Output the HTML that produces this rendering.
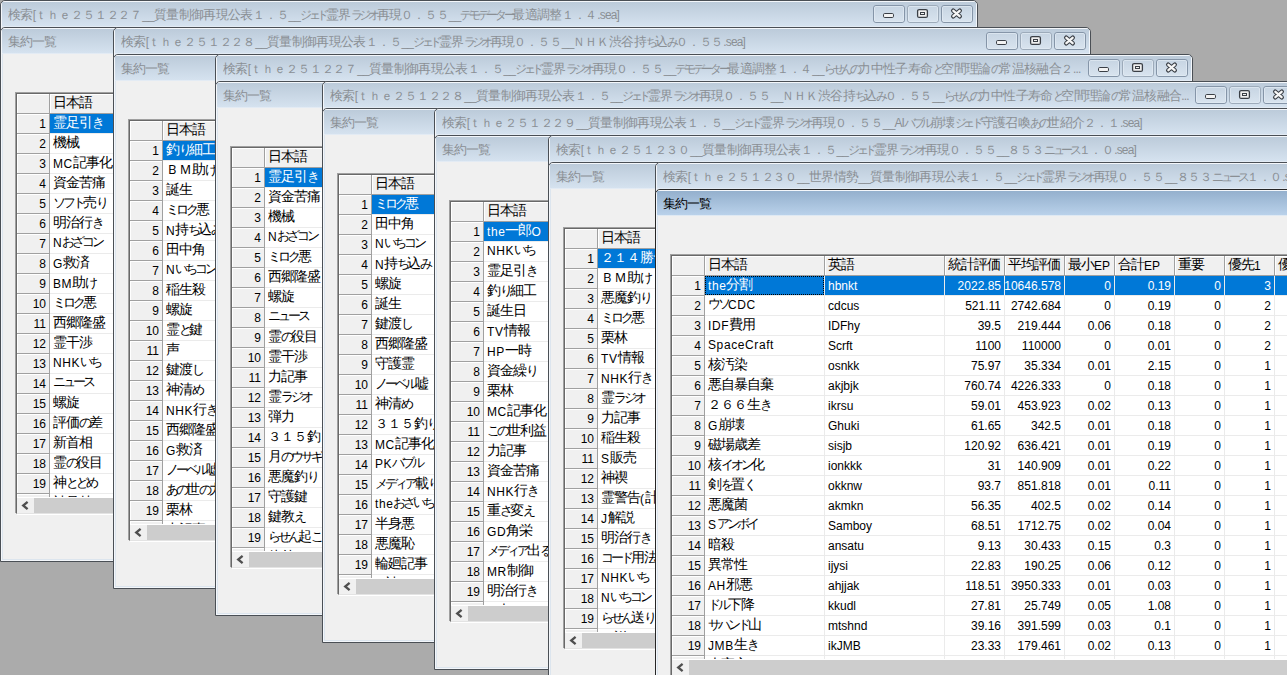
<!DOCTYPE html>
<html><head><meta charset="utf-8"><style>
html,body{margin:0;padding:0}
body{width:1287px;height:675px;overflow:hidden;background:#ababab;position:relative;font-family:"Liberation Sans",sans-serif;font-size:12px;color:#000}
.w{position:absolute;width:978px;height:535px;box-sizing:border-box;border:1px solid #4a4f55;border-radius:5px 5px 0 0;background:#f0f0f0;overflow:hidden}
.w::before{content:"";position:absolute;left:0;top:0;right:0;bottom:0;border:1px solid #f4f7fb;border-radius:4px 4px 0 0;box-shadow:inset 1px 0 0 #dce5ee,inset -1px 0 0 #dce5ee,inset 0 -1px 0 #dce5ee}
.tb{position:absolute;left:1px;right:1px;top:1px;height:24px;background:linear-gradient(#bccbda,#d5e2ef);border-bottom:1px solid #e3ebf4}
.act{border-color:#262626}
.act .tb{background:linear-gradient(#94b0cd,#b9d1ea);border-bottom-color:#dfe9f3}
.tt{position:absolute;left:6px;top:6px;white-space:nowrap;color:#8a8f94;font-size:12px;line-height:14px}
.act .tt{color:#000}
.grid{position:absolute;left:15px;top:65px;width:950px;height:419px;border:1px solid;border-color:#696969 #e3e3e3 #e3e3e3 #696969;box-shadow:-1px -1px 0 #a0a0a0,1px 1px 0 #fff;background:#fff;overflow:hidden}
.grid>div{position:absolute;box-sizing:border-box;height:20px;white-space:nowrap;overflow:hidden}
.hdr{background:#f0f0f0;border-right:1px solid #a0a0a0;border-bottom:1px solid #a0a0a0;box-shadow:inset 1px 1px 0 #fff}
.hdr>span{position:absolute;left:3px;top:2px;line-height:14px}
.rh{left:0;width:33px;background:#f0f0f0;border-right:1px solid #a0a0a0;border-bottom:1px solid #a0a0a0;box-shadow:inset 1px 1px 0 #fff}
.rh>span{position:absolute;right:3px;top:3px;line-height:14px}
.c{border-right:1px solid #ebebeb;border-bottom:1px solid #ebebeb}
.c>span{position:absolute;left:3px;top:3px;line-height:14px}
.c.r>span{left:auto;right:3px}
.c.jp>span{top:2px}
.c.sel{background:#0078d7;color:#fff}
.c.foc::after{content:"";position:absolute;left:0;top:0;right:0;bottom:0;border:1px dotted #000}
.hsb{left:0;top:403px;width:948px;height:16px !important;background:#f0f0f0;box-shadow:inset 0 1px 0 #fff}
.arr{position:absolute;left:0;top:0}
.thumb{position:absolute;left:17px;top:1px;width:931px;height:15px;background:#cdcdcd}

.tt .K{font-size:12.5px;letter-spacing:-0.5px}
.tt .H{font-size:12px;letter-spacing:-3.3px}
.tt .h{letter-spacing:-1.2px}
.tt .L{letter-spacing:-0.8px}
.grid .K{font-size:14px;letter-spacing:-1px}
.grid .H{font-size:13px;letter-spacing:-3px}
.grid .F{font-size:13px}
.ken .tt{transform:scaleX(.99);transform-origin:0 0}
.btns{position:absolute;left:871px;top:3px}
.grid .K,.grid .H,.grid .F{position:relative;top:-1px}
.c.jp .L{letter-spacing:.6px}
.shu .tt .K{letter-spacing:-1px}

</style></head><body>
<div class="w ken" style="left:0px;top:0px"><div class="tb"><span class="tt"><span class="K">検索</span><span class="L">[</span><span class="F">ｔｈｅ２５１２２７</span><span class="L">__</span><span class="K">質量制御再現公表</span><span class="F">１．５</span><span class="L">__</span><span class="H">ジェド</span><span class="K">霊界</span><span class="H">ラジオ</span><span class="K">再現</span><span class="F">０．５５</span><span class="L">__</span><span class="H">デモデーター</span><span class="K">最適調整</span><span class="F">１．４</span><span class="L">.sea]</span></span><svg class="btns" width="100" height="18" viewBox="0 0 100 18"><defs><linearGradient id="bg" x1="0" y1="0" x2="0" y2="1"><stop offset="0" stop-color="#c6d4e2"/><stop offset="1" stop-color="#d9e4ef"/></linearGradient></defs>
<rect x="0.5" y="0.5" width="31" height="17" rx="2.5" fill="url(#bg)" stroke="#8595a8"/><rect x="1.5" y="1.5" width="29" height="15" rx="1.5" fill="none" stroke="#e3ebf3" stroke-opacity=".7"/>
<rect x="34.5" y="0.5" width="31" height="17" rx="2.5" fill="url(#bg)" stroke="#9dabba"/><rect x="35.5" y="1.5" width="29" height="15" rx="1.5" fill="none" stroke="#e3ebf3" stroke-opacity=".7"/>
<rect x="68.5" y="0.5" width="31" height="17" rx="2.5" fill="url(#bg)" stroke="#8595a8"/><rect x="69.5" y="1.5" width="29" height="15" rx="1.5" fill="none" stroke="#e3ebf3" stroke-opacity=".7"/>
<rect x="10.5" y="8.5" width="10" height="4" rx="1.2" fill="#f3f3f3" stroke="#3a3f46"/>
<rect x="44.6" y="4.6" width="9.8" height="7.8" rx="1.5" fill="#efefef" stroke="#3a3f46" stroke-width="1.3"/><rect x="47.5" y="7.5" width="4" height="2" fill="#f3f3f3" stroke="#3a3f46"/>
<path d="M80.2 5.6 L86.8 11.4 M86.8 5.6 L80.2 11.4" stroke="#3a3f46" stroke-width="4.4" stroke-linecap="round"/><path d="M80.4 5.8 L86.6 11.2 M86.6 5.8 L80.4 11.2" stroke="#f6f6f6" stroke-width="2.4" stroke-linecap="round"/>
</svg></div></div>
<div class="w shu" style="left:0px;top:27px"><div class="tb"><span class="tt"><span class="K">集約一覧</span></span></div><div class="grid">
<div class="hdr" style="left:0;top:0;width:33px"></div>
<div class="hdr" style="left:33px;top:0;width:120px"><span><span class="K">日本語</span></span></div>
<div class="rh" style="top:20px"><span>1</span></div>
<div class="c sel jp" style="left:33px;top:20px;width:120px"><span><span class="K">霊足引</span><span class="H">き</span></span></div>
<div class="rh" style="top:40px"><span>2</span></div>
<div class="c jp" style="left:33px;top:40px;width:120px"><span><span class="K">機械</span></span></div>
<div class="rh" style="top:60px"><span>3</span></div>
<div class="c jp" style="left:33px;top:60px;width:120px"><span><span class="L">MC</span><span class="K">記事化</span></span></div>
<div class="rh" style="top:80px"><span>4</span></div>
<div class="c jp" style="left:33px;top:80px;width:120px"><span><span class="K">資金苦痛</span></span></div>
<div class="rh" style="top:100px"><span>5</span></div>
<div class="c jp" style="left:33px;top:100px;width:120px"><span><span class="H">ソフト</span><span class="K">売</span><span class="H">り</span></span></div>
<div class="rh" style="top:120px"><span>6</span></div>
<div class="c jp" style="left:33px;top:120px;width:120px"><span><span class="K">明治行</span><span class="H">き</span></span></div>
<div class="rh" style="top:140px"><span>7</span></div>
<div class="c jp" style="left:33px;top:140px;width:120px"><span><span class="L">N</span><span class="H">おざコン</span></span></div>
<div class="rh" style="top:160px"><span>8</span></div>
<div class="c jp" style="left:33px;top:160px;width:120px"><span><span class="L">G</span><span class="K">救済</span></span></div>
<div class="rh" style="top:180px"><span>9</span></div>
<div class="c jp" style="left:33px;top:180px;width:120px"><span><span class="L">BM</span><span class="K">助</span><span class="H">け</span></span></div>
<div class="rh" style="top:200px"><span>10</span></div>
<div class="c jp" style="left:33px;top:200px;width:120px"><span><span class="H">ミロク</span><span class="K">悪</span></span></div>
<div class="rh" style="top:220px"><span>11</span></div>
<div class="c jp" style="left:33px;top:220px;width:120px"><span><span class="K">西郷隆盛</span></span></div>
<div class="rh" style="top:240px"><span>12</span></div>
<div class="c jp" style="left:33px;top:240px;width:120px"><span><span class="K">霊干渉</span></span></div>
<div class="rh" style="top:260px"><span>13</span></div>
<div class="c jp" style="left:33px;top:260px;width:120px"><span><span class="L">NHK</span><span class="H">いち</span></span></div>
<div class="rh" style="top:280px"><span>14</span></div>
<div class="c jp" style="left:33px;top:280px;width:120px"><span><span class="H">ニュース</span></span></div>
<div class="rh" style="top:300px"><span>15</span></div>
<div class="c jp" style="left:33px;top:300px;width:120px"><span><span class="K">螺旋</span></span></div>
<div class="rh" style="top:320px"><span>16</span></div>
<div class="c jp" style="left:33px;top:320px;width:120px"><span><span class="K">評価</span><span class="H">の</span><span class="K">差</span></span></div>
<div class="rh" style="top:340px"><span>17</span></div>
<div class="c jp" style="left:33px;top:340px;width:120px"><span><span class="K">新首相</span></span></div>
<div class="rh" style="top:360px"><span>18</span></div>
<div class="c jp" style="left:33px;top:360px;width:120px"><span><span class="K">霊</span><span class="H">の</span><span class="K">役目</span></span></div>
<div class="rh" style="top:380px"><span>19</span></div>
<div class="c jp" style="left:33px;top:380px;width:120px"><span><span class="K">神</span><span class="H">とどめ</span></span></div>
<div class="rh" style="top:400px"><span>20</span></div>
<div class="c jp" style="left:33px;top:400px;width:120px"><span><span class="K">神足林</span></span></div>
<div class="hsb"><svg class="arr" width="17" height="16" viewBox="0 0 17 16"><path d="M10.6 4.8 L6.2 8.5 L10.6 12.2" stroke="#4f4f4f" stroke-width="2.3" fill="none"/></svg><div class="thumb"></div></div>
</div></div>
<div class="w ken" style="left:113px;top:27px"><div class="tb"><span class="tt"><span class="K">検索</span><span class="L">[</span><span class="F">ｔｈｅ２５１２２８</span><span class="L">__</span><span class="K">質量制御再現公表</span><span class="F">１．５</span><span class="L">__</span><span class="H">ジェド</span><span class="K">霊界</span><span class="H">ラジオ</span><span class="K">再現</span><span class="F">０．５５</span><span class="L">__</span><span class="F">ＮＨＫ</span><span class="K">渋谷持</span><span class="H">ち</span><span class="K">込</span><span class="H">み</span><span class="F">０．５５</span><span class="L">.sea]</span></span><svg class="btns" width="100" height="18" viewBox="0 0 100 18"><defs><linearGradient id="bg" x1="0" y1="0" x2="0" y2="1"><stop offset="0" stop-color="#c6d4e2"/><stop offset="1" stop-color="#d9e4ef"/></linearGradient></defs>
<rect x="0.5" y="0.5" width="31" height="17" rx="2.5" fill="url(#bg)" stroke="#8595a8"/><rect x="1.5" y="1.5" width="29" height="15" rx="1.5" fill="none" stroke="#e3ebf3" stroke-opacity=".7"/>
<rect x="34.5" y="0.5" width="31" height="17" rx="2.5" fill="url(#bg)" stroke="#9dabba"/><rect x="35.5" y="1.5" width="29" height="15" rx="1.5" fill="none" stroke="#e3ebf3" stroke-opacity=".7"/>
<rect x="68.5" y="0.5" width="31" height="17" rx="2.5" fill="url(#bg)" stroke="#8595a8"/><rect x="69.5" y="1.5" width="29" height="15" rx="1.5" fill="none" stroke="#e3ebf3" stroke-opacity=".7"/>
<rect x="10.5" y="8.5" width="10" height="4" rx="1.2" fill="#f3f3f3" stroke="#3a3f46"/>
<rect x="44.6" y="4.6" width="9.8" height="7.8" rx="1.5" fill="#efefef" stroke="#3a3f46" stroke-width="1.3"/><rect x="47.5" y="7.5" width="4" height="2" fill="#f3f3f3" stroke="#3a3f46"/>
<path d="M80.2 5.6 L86.8 11.4 M86.8 5.6 L80.2 11.4" stroke="#3a3f46" stroke-width="4.4" stroke-linecap="round"/><path d="M80.4 5.8 L86.6 11.2 M86.6 5.8 L80.4 11.2" stroke="#f6f6f6" stroke-width="2.4" stroke-linecap="round"/>
</svg></div></div>
<div class="w shu" style="left:113px;top:54px"><div class="tb"><span class="tt"><span class="K">集約一覧</span></span></div><div class="grid">
<div class="hdr" style="left:0;top:0;width:33px"></div>
<div class="hdr" style="left:33px;top:0;width:120px"><span><span class="K">日本語</span></span></div>
<div class="rh" style="top:20px"><span>1</span></div>
<div class="c sel jp" style="left:33px;top:20px;width:120px"><span><span class="K">釣</span><span class="H">り</span><span class="K">細工</span></span></div>
<div class="rh" style="top:40px"><span>2</span></div>
<div class="c jp" style="left:33px;top:40px;width:120px"><span><span class="F">ＢＭ</span><span class="K">助</span><span class="H">け</span></span></div>
<div class="rh" style="top:60px"><span>3</span></div>
<div class="c jp" style="left:33px;top:60px;width:120px"><span><span class="K">誕生</span></span></div>
<div class="rh" style="top:80px"><span>4</span></div>
<div class="c jp" style="left:33px;top:80px;width:120px"><span><span class="H">ミロク</span><span class="K">悪</span></span></div>
<div class="rh" style="top:100px"><span>5</span></div>
<div class="c jp" style="left:33px;top:100px;width:120px"><span><span class="L">N</span><span class="K">持</span><span class="H">ち</span><span class="K">込</span><span class="H">み</span></span></div>
<div class="rh" style="top:120px"><span>6</span></div>
<div class="c jp" style="left:33px;top:120px;width:120px"><span><span class="K">田中角</span></span></div>
<div class="rh" style="top:140px"><span>7</span></div>
<div class="c jp" style="left:33px;top:140px;width:120px"><span><span class="L">N</span><span class="H">いちコン</span></span></div>
<div class="rh" style="top:160px"><span>8</span></div>
<div class="c jp" style="left:33px;top:160px;width:120px"><span><span class="K">稲生殺</span></span></div>
<div class="rh" style="top:180px"><span>9</span></div>
<div class="c jp" style="left:33px;top:180px;width:120px"><span><span class="K">螺旋</span></span></div>
<div class="rh" style="top:200px"><span>10</span></div>
<div class="c jp" style="left:33px;top:200px;width:120px"><span><span class="K">霊</span><span class="H">と</span><span class="K">鍵</span></span></div>
<div class="rh" style="top:220px"><span>11</span></div>
<div class="c jp" style="left:33px;top:220px;width:120px"><span><span class="K">声</span></span></div>
<div class="rh" style="top:240px"><span>12</span></div>
<div class="c jp" style="left:33px;top:240px;width:120px"><span><span class="K">鍵渡</span><span class="H">し</span></span></div>
<div class="rh" style="top:260px"><span>13</span></div>
<div class="c jp" style="left:33px;top:260px;width:120px"><span><span class="K">神清</span><span class="H">め</span></span></div>
<div class="rh" style="top:280px"><span>14</span></div>
<div class="c jp" style="left:33px;top:280px;width:120px"><span><span class="L">NHK</span><span class="K">行</span><span class="H">き</span></span></div>
<div class="rh" style="top:300px"><span>15</span></div>
<div class="c jp" style="left:33px;top:300px;width:120px"><span><span class="K">西郷隆盛</span></span></div>
<div class="rh" style="top:320px"><span>16</span></div>
<div class="c jp" style="left:33px;top:320px;width:120px"><span><span class="L">G</span><span class="K">救済</span></span></div>
<div class="rh" style="top:340px"><span>17</span></div>
<div class="c jp" style="left:33px;top:340px;width:120px"><span><span class="H">ノーベル</span><span class="K">嘘</span></span></div>
<div class="rh" style="top:360px"><span>18</span></div>
<div class="c jp" style="left:33px;top:360px;width:120px"><span><span class="H">あの</span><span class="K">世</span><span class="H">の</span><span class="K">力</span></span></div>
<div class="rh" style="top:380px"><span>19</span></div>
<div class="c jp" style="left:33px;top:380px;width:120px"><span><span class="K">栗林</span></span></div>
<div class="rh" style="top:400px"><span>20</span></div>
<div class="c jp" style="left:33px;top:400px;width:120px"><span><span class="K">力記事</span></span></div>
<div class="hsb"><svg class="arr" width="17" height="16" viewBox="0 0 17 16"><path d="M10.6 4.8 L6.2 8.5 L10.6 12.2" stroke="#4f4f4f" stroke-width="2.3" fill="none"/></svg><div class="thumb"></div></div>
</div></div>
<div class="w ken" style="left:215px;top:54px"><div class="tb"><span class="tt"><span class="K">検索</span><span class="L">[</span><span class="F">ｔｈｅ２５１２２７</span><span class="L">__</span><span class="K">質量制御再現公表</span><span class="F">１．５</span><span class="L">__</span><span class="H">ジェド</span><span class="K">霊界</span><span class="H">ラジオ</span><span class="K">再現</span><span class="F">０．５５</span><span class="L">__</span><span class="H">デモデーター</span><span class="K">最適調整</span><span class="F">１．４</span><span class="L">__</span><span class="H">らせんの</span><span class="K">力中性子寿命</span><span class="H">と</span><span class="K">空間理論</span><span class="H">の</span><span class="K">常温核融合</span><span class="F">２</span><span class="L">...</span></span><svg class="btns" width="100" height="18" viewBox="0 0 100 18"><defs><linearGradient id="bg" x1="0" y1="0" x2="0" y2="1"><stop offset="0" stop-color="#c6d4e2"/><stop offset="1" stop-color="#d9e4ef"/></linearGradient></defs>
<rect x="0.5" y="0.5" width="31" height="17" rx="2.5" fill="url(#bg)" stroke="#8595a8"/><rect x="1.5" y="1.5" width="29" height="15" rx="1.5" fill="none" stroke="#e3ebf3" stroke-opacity=".7"/>
<rect x="34.5" y="0.5" width="31" height="17" rx="2.5" fill="url(#bg)" stroke="#9dabba"/><rect x="35.5" y="1.5" width="29" height="15" rx="1.5" fill="none" stroke="#e3ebf3" stroke-opacity=".7"/>
<rect x="68.5" y="0.5" width="31" height="17" rx="2.5" fill="url(#bg)" stroke="#8595a8"/><rect x="69.5" y="1.5" width="29" height="15" rx="1.5" fill="none" stroke="#e3ebf3" stroke-opacity=".7"/>
<rect x="10.5" y="8.5" width="10" height="4" rx="1.2" fill="#f3f3f3" stroke="#3a3f46"/>
<rect x="44.6" y="4.6" width="9.8" height="7.8" rx="1.5" fill="#efefef" stroke="#3a3f46" stroke-width="1.3"/><rect x="47.5" y="7.5" width="4" height="2" fill="#f3f3f3" stroke="#3a3f46"/>
<path d="M80.2 5.6 L86.8 11.4 M86.8 5.6 L80.2 11.4" stroke="#3a3f46" stroke-width="4.4" stroke-linecap="round"/><path d="M80.4 5.8 L86.6 11.2 M86.6 5.8 L80.4 11.2" stroke="#f6f6f6" stroke-width="2.4" stroke-linecap="round"/>
</svg></div></div>
<div class="w shu" style="left:215px;top:81px"><div class="tb"><span class="tt"><span class="K">集約一覧</span></span></div><div class="grid">
<div class="hdr" style="left:0;top:0;width:33px"></div>
<div class="hdr" style="left:33px;top:0;width:120px"><span><span class="K">日本語</span></span></div>
<div class="rh" style="top:20px"><span>1</span></div>
<div class="c sel jp" style="left:33px;top:20px;width:120px"><span><span class="K">霊足引</span><span class="H">き</span></span></div>
<div class="rh" style="top:40px"><span>2</span></div>
<div class="c jp" style="left:33px;top:40px;width:120px"><span><span class="K">資金苦痛</span></span></div>
<div class="rh" style="top:60px"><span>3</span></div>
<div class="c jp" style="left:33px;top:60px;width:120px"><span><span class="K">機械</span></span></div>
<div class="rh" style="top:80px"><span>4</span></div>
<div class="c jp" style="left:33px;top:80px;width:120px"><span><span class="L">N</span><span class="H">おざコン</span></span></div>
<div class="rh" style="top:100px"><span>5</span></div>
<div class="c jp" style="left:33px;top:100px;width:120px"><span><span class="H">ミロク</span><span class="K">悪</span></span></div>
<div class="rh" style="top:120px"><span>6</span></div>
<div class="c jp" style="left:33px;top:120px;width:120px"><span><span class="K">西郷隆盛</span></span></div>
<div class="rh" style="top:140px"><span>7</span></div>
<div class="c jp" style="left:33px;top:140px;width:120px"><span><span class="K">螺旋</span></span></div>
<div class="rh" style="top:160px"><span>8</span></div>
<div class="c jp" style="left:33px;top:160px;width:120px"><span><span class="H">ニュース</span></span></div>
<div class="rh" style="top:180px"><span>9</span></div>
<div class="c jp" style="left:33px;top:180px;width:120px"><span><span class="K">霊</span><span class="H">の</span><span class="K">役目</span></span></div>
<div class="rh" style="top:200px"><span>10</span></div>
<div class="c jp" style="left:33px;top:200px;width:120px"><span><span class="K">霊干渉</span></span></div>
<div class="rh" style="top:220px"><span>11</span></div>
<div class="c jp" style="left:33px;top:220px;width:120px"><span><span class="K">力記事</span></span></div>
<div class="rh" style="top:240px"><span>12</span></div>
<div class="c jp" style="left:33px;top:240px;width:120px"><span><span class="K">霊</span><span class="H">ラジオ</span></span></div>
<div class="rh" style="top:260px"><span>13</span></div>
<div class="c jp" style="left:33px;top:260px;width:120px"><span><span class="K">弾力</span></span></div>
<div class="rh" style="top:280px"><span>14</span></div>
<div class="c jp" style="left:33px;top:280px;width:120px"><span><span class="F">３１５</span><span class="K">釣</span><span class="H">り</span></span></div>
<div class="rh" style="top:300px"><span>15</span></div>
<div class="c jp" style="left:33px;top:300px;width:120px"><span><span class="K">月</span><span class="H">のウサギ</span></span></div>
<div class="rh" style="top:320px"><span>16</span></div>
<div class="c jp" style="left:33px;top:320px;width:120px"><span><span class="K">悪魔釣</span><span class="H">り</span></span></div>
<div class="rh" style="top:340px"><span>17</span></div>
<div class="c jp" style="left:33px;top:340px;width:120px"><span><span class="K">守護鍵</span></span></div>
<div class="rh" style="top:360px"><span>18</span></div>
<div class="c jp" style="left:33px;top:360px;width:120px"><span><span class="K">鍵教</span><span class="H">え</span></span></div>
<div class="rh" style="top:380px"><span>19</span></div>
<div class="c jp" style="left:33px;top:380px;width:120px"><span><span class="H">らせん</span><span class="K">起</span><span class="H">こし</span></span></div>
<div class="rh" style="top:400px"><span>20</span></div>
<div class="c jp" style="left:33px;top:400px;width:120px"><span><span class="K">体外</span></span></div>
<div class="hsb"><svg class="arr" width="17" height="16" viewBox="0 0 17 16"><path d="M10.6 4.8 L6.2 8.5 L10.6 12.2" stroke="#4f4f4f" stroke-width="2.3" fill="none"/></svg><div class="thumb"></div></div>
</div></div>
<div class="w ken" style="left:322px;top:81px"><div class="tb"><span class="tt"><span class="K">検索</span><span class="L">[</span><span class="F">ｔｈｅ２５１２２８</span><span class="L">__</span><span class="K">質量制御再現公表</span><span class="F">１．５</span><span class="L">__</span><span class="H">ジェド</span><span class="K">霊界</span><span class="H">ラジオ</span><span class="K">再現</span><span class="F">０．５５</span><span class="L">__</span><span class="F">ＮＨＫ</span><span class="K">渋谷持</span><span class="H">ち</span><span class="K">込</span><span class="H">み</span><span class="F">０．５５</span><span class="L">__</span><span class="H">らせんの</span><span class="K">力中性子寿命</span><span class="H">と</span><span class="K">空間理論</span><span class="H">の</span><span class="K">常温核融合</span><span class="L">...</span></span><svg class="btns" width="100" height="18" viewBox="0 0 100 18"><defs><linearGradient id="bg" x1="0" y1="0" x2="0" y2="1"><stop offset="0" stop-color="#c6d4e2"/><stop offset="1" stop-color="#d9e4ef"/></linearGradient></defs>
<rect x="0.5" y="0.5" width="31" height="17" rx="2.5" fill="url(#bg)" stroke="#8595a8"/><rect x="1.5" y="1.5" width="29" height="15" rx="1.5" fill="none" stroke="#e3ebf3" stroke-opacity=".7"/>
<rect x="34.5" y="0.5" width="31" height="17" rx="2.5" fill="url(#bg)" stroke="#9dabba"/><rect x="35.5" y="1.5" width="29" height="15" rx="1.5" fill="none" stroke="#e3ebf3" stroke-opacity=".7"/>
<rect x="68.5" y="0.5" width="31" height="17" rx="2.5" fill="url(#bg)" stroke="#8595a8"/><rect x="69.5" y="1.5" width="29" height="15" rx="1.5" fill="none" stroke="#e3ebf3" stroke-opacity=".7"/>
<rect x="10.5" y="8.5" width="10" height="4" rx="1.2" fill="#f3f3f3" stroke="#3a3f46"/>
<rect x="44.6" y="4.6" width="9.8" height="7.8" rx="1.5" fill="#efefef" stroke="#3a3f46" stroke-width="1.3"/><rect x="47.5" y="7.5" width="4" height="2" fill="#f3f3f3" stroke="#3a3f46"/>
<path d="M80.2 5.6 L86.8 11.4 M86.8 5.6 L80.2 11.4" stroke="#3a3f46" stroke-width="4.4" stroke-linecap="round"/><path d="M80.4 5.8 L86.6 11.2 M86.6 5.8 L80.4 11.2" stroke="#f6f6f6" stroke-width="2.4" stroke-linecap="round"/>
</svg></div></div>
<div class="w shu" style="left:322px;top:108px"><div class="tb"><span class="tt"><span class="K">集約一覧</span></span></div><div class="grid">
<div class="hdr" style="left:0;top:0;width:33px"></div>
<div class="hdr" style="left:33px;top:0;width:120px"><span><span class="K">日本語</span></span></div>
<div class="rh" style="top:20px"><span>1</span></div>
<div class="c sel jp" style="left:33px;top:20px;width:120px"><span><span class="H">ミロク</span><span class="K">悪</span></span></div>
<div class="rh" style="top:40px"><span>2</span></div>
<div class="c jp" style="left:33px;top:40px;width:120px"><span><span class="K">田中角</span></span></div>
<div class="rh" style="top:60px"><span>3</span></div>
<div class="c jp" style="left:33px;top:60px;width:120px"><span><span class="L">N</span><span class="H">いちコン</span></span></div>
<div class="rh" style="top:80px"><span>4</span></div>
<div class="c jp" style="left:33px;top:80px;width:120px"><span><span class="L">N</span><span class="K">持</span><span class="H">ち</span><span class="K">込</span><span class="H">み</span></span></div>
<div class="rh" style="top:100px"><span>5</span></div>
<div class="c jp" style="left:33px;top:100px;width:120px"><span><span class="K">螺旋</span></span></div>
<div class="rh" style="top:120px"><span>6</span></div>
<div class="c jp" style="left:33px;top:120px;width:120px"><span><span class="K">誕生</span></span></div>
<div class="rh" style="top:140px"><span>7</span></div>
<div class="c jp" style="left:33px;top:140px;width:120px"><span><span class="K">鍵渡</span><span class="H">し</span></span></div>
<div class="rh" style="top:160px"><span>8</span></div>
<div class="c jp" style="left:33px;top:160px;width:120px"><span><span class="K">西郷隆盛</span></span></div>
<div class="rh" style="top:180px"><span>9</span></div>
<div class="c jp" style="left:33px;top:180px;width:120px"><span><span class="K">守護霊</span></span></div>
<div class="rh" style="top:200px"><span>10</span></div>
<div class="c jp" style="left:33px;top:200px;width:120px"><span><span class="H">ノーベル</span><span class="K">嘘</span></span></div>
<div class="rh" style="top:220px"><span>11</span></div>
<div class="c jp" style="left:33px;top:220px;width:120px"><span><span class="K">神清</span><span class="H">め</span></span></div>
<div class="rh" style="top:240px"><span>12</span></div>
<div class="c jp" style="left:33px;top:240px;width:120px"><span><span class="F">３１５</span><span class="K">釣</span><span class="H">り</span></span></div>
<div class="rh" style="top:260px"><span>13</span></div>
<div class="c jp" style="left:33px;top:260px;width:120px"><span><span class="L">MC</span><span class="K">記事化</span></span></div>
<div class="rh" style="top:280px"><span>14</span></div>
<div class="c jp" style="left:33px;top:280px;width:120px"><span><span class="L">PK</span><span class="H">バブル</span></span></div>
<div class="rh" style="top:300px"><span>15</span></div>
<div class="c jp" style="left:33px;top:300px;width:120px"><span><span class="H">メディア</span><span class="K">載</span><span class="H">り</span></span></div>
<div class="rh" style="top:320px"><span>16</span></div>
<div class="c jp" style="left:33px;top:320px;width:120px"><span><span class="L">the</span><span class="H">おざいち</span></span></div>
<div class="rh" style="top:340px"><span>17</span></div>
<div class="c jp" style="left:33px;top:340px;width:120px"><span><span class="K">半身悪</span></span></div>
<div class="rh" style="top:360px"><span>18</span></div>
<div class="c jp" style="left:33px;top:360px;width:120px"><span><span class="K">悪魔恥</span></span></div>
<div class="rh" style="top:380px"><span>19</span></div>
<div class="c jp" style="left:33px;top:380px;width:120px"><span><span class="K">輪廻記事</span></span></div>
<div class="rh" style="top:400px"><span>20</span></div>
<div class="c jp" style="left:33px;top:400px;width:120px"><span><span class="H">ー</span><span class="K">神</span></span></div>
<div class="hsb"><svg class="arr" width="17" height="16" viewBox="0 0 17 16"><path d="M10.6 4.8 L6.2 8.5 L10.6 12.2" stroke="#4f4f4f" stroke-width="2.3" fill="none"/></svg><div class="thumb"></div></div>
</div></div>
<div class="w ken" style="left:434px;top:108px"><div class="tb"><span class="tt"><span class="K">検索</span><span class="L">[</span><span class="F">ｔｈｅ２５１２２９</span><span class="L">__</span><span class="K">質量制御再現公表</span><span class="F">１．５</span><span class="L">__</span><span class="H">ジェド</span><span class="K">霊界</span><span class="H">ラジオ</span><span class="K">再現</span><span class="F">０．５５</span><span class="L">__AI</span><span class="H">バブル</span><span class="K">崩壊</span><span class="H">ジェド</span><span class="K">守護召喚</span><span class="H">あの</span><span class="K">世紹介</span><span class="F">２．１</span><span class="L">.sea]</span></span><svg class="btns" width="100" height="18" viewBox="0 0 100 18"><defs><linearGradient id="bg" x1="0" y1="0" x2="0" y2="1"><stop offset="0" stop-color="#c6d4e2"/><stop offset="1" stop-color="#d9e4ef"/></linearGradient></defs>
<rect x="0.5" y="0.5" width="31" height="17" rx="2.5" fill="url(#bg)" stroke="#8595a8"/><rect x="1.5" y="1.5" width="29" height="15" rx="1.5" fill="none" stroke="#e3ebf3" stroke-opacity=".7"/>
<rect x="34.5" y="0.5" width="31" height="17" rx="2.5" fill="url(#bg)" stroke="#9dabba"/><rect x="35.5" y="1.5" width="29" height="15" rx="1.5" fill="none" stroke="#e3ebf3" stroke-opacity=".7"/>
<rect x="68.5" y="0.5" width="31" height="17" rx="2.5" fill="url(#bg)" stroke="#8595a8"/><rect x="69.5" y="1.5" width="29" height="15" rx="1.5" fill="none" stroke="#e3ebf3" stroke-opacity=".7"/>
<rect x="10.5" y="8.5" width="10" height="4" rx="1.2" fill="#f3f3f3" stroke="#3a3f46"/>
<rect x="44.6" y="4.6" width="9.8" height="7.8" rx="1.5" fill="#efefef" stroke="#3a3f46" stroke-width="1.3"/><rect x="47.5" y="7.5" width="4" height="2" fill="#f3f3f3" stroke="#3a3f46"/>
<path d="M80.2 5.6 L86.8 11.4 M86.8 5.6 L80.2 11.4" stroke="#3a3f46" stroke-width="4.4" stroke-linecap="round"/><path d="M80.4 5.8 L86.6 11.2 M86.6 5.8 L80.4 11.2" stroke="#f6f6f6" stroke-width="2.4" stroke-linecap="round"/>
</svg></div></div>
<div class="w shu" style="left:434px;top:135px"><div class="tb"><span class="tt"><span class="K">集約一覧</span></span></div><div class="grid">
<div class="hdr" style="left:0;top:0;width:33px"></div>
<div class="hdr" style="left:33px;top:0;width:120px"><span><span class="K">日本語</span></span></div>
<div class="rh" style="top:20px"><span>1</span></div>
<div class="c sel jp" style="left:33px;top:20px;width:120px"><span><span class="L">the</span><span class="K">一郎</span><span class="L">O</span></span></div>
<div class="rh" style="top:40px"><span>2</span></div>
<div class="c jp" style="left:33px;top:40px;width:120px"><span><span class="L">NHK</span><span class="H">いち</span></span></div>
<div class="rh" style="top:60px"><span>3</span></div>
<div class="c jp" style="left:33px;top:60px;width:120px"><span><span class="K">霊足引</span><span class="H">き</span></span></div>
<div class="rh" style="top:80px"><span>4</span></div>
<div class="c jp" style="left:33px;top:80px;width:120px"><span><span class="K">釣</span><span class="H">り</span><span class="K">細工</span></span></div>
<div class="rh" style="top:100px"><span>5</span></div>
<div class="c jp" style="left:33px;top:100px;width:120px"><span><span class="K">誕生日</span></span></div>
<div class="rh" style="top:120px"><span>6</span></div>
<div class="c jp" style="left:33px;top:120px;width:120px"><span><span class="L">TV</span><span class="K">情報</span></span></div>
<div class="rh" style="top:140px"><span>7</span></div>
<div class="c jp" style="left:33px;top:140px;width:120px"><span><span class="L">HP</span><span class="K">一時</span></span></div>
<div class="rh" style="top:160px"><span>8</span></div>
<div class="c jp" style="left:33px;top:160px;width:120px"><span><span class="K">資金繰</span><span class="H">り</span></span></div>
<div class="rh" style="top:180px"><span>9</span></div>
<div class="c jp" style="left:33px;top:180px;width:120px"><span><span class="K">栗林</span></span></div>
<div class="rh" style="top:200px"><span>10</span></div>
<div class="c jp" style="left:33px;top:200px;width:120px"><span><span class="L">MC</span><span class="K">記事化</span></span></div>
<div class="rh" style="top:220px"><span>11</span></div>
<div class="c jp" style="left:33px;top:220px;width:120px"><span><span class="H">この</span><span class="K">世利益</span></span></div>
<div class="rh" style="top:240px"><span>12</span></div>
<div class="c jp" style="left:33px;top:240px;width:120px"><span><span class="K">力記事</span></span></div>
<div class="rh" style="top:260px"><span>13</span></div>
<div class="c jp" style="left:33px;top:260px;width:120px"><span><span class="K">資金苦痛</span></span></div>
<div class="rh" style="top:280px"><span>14</span></div>
<div class="c jp" style="left:33px;top:280px;width:120px"><span><span class="L">NHK</span><span class="K">行</span><span class="H">き</span></span></div>
<div class="rh" style="top:300px"><span>15</span></div>
<div class="c jp" style="left:33px;top:300px;width:120px"><span><span class="K">重</span><span class="H">さ</span><span class="K">変</span><span class="H">え</span></span></div>
<div class="rh" style="top:320px"><span>16</span></div>
<div class="c jp" style="left:33px;top:320px;width:120px"><span><span class="L">GD</span><span class="K">角栄</span></span></div>
<div class="rh" style="top:340px"><span>17</span></div>
<div class="c jp" style="left:33px;top:340px;width:120px"><span><span class="H">メディア</span><span class="K">出</span><span class="H">る</span></span></div>
<div class="rh" style="top:360px"><span>18</span></div>
<div class="c jp" style="left:33px;top:360px;width:120px"><span><span class="L">MR</span><span class="K">制御</span></span></div>
<div class="rh" style="top:380px"><span>19</span></div>
<div class="c jp" style="left:33px;top:380px;width:120px"><span><span class="K">明治行</span><span class="H">き</span></span></div>
<div class="rh" style="top:400px"><span>20</span></div>
<div class="c jp" style="left:33px;top:400px;width:120px"><span><span class="H">ー</span><span class="K">大</span></span></div>
<div class="hsb"><svg class="arr" width="17" height="16" viewBox="0 0 17 16"><path d="M10.6 4.8 L6.2 8.5 L10.6 12.2" stroke="#4f4f4f" stroke-width="2.3" fill="none"/></svg><div class="thumb"></div></div>
</div></div>
<div class="w ken" style="left:548px;top:135px"><div class="tb"><span class="tt"><span class="K">検索</span><span class="L">[</span><span class="F">ｔｈｅ２５１２３０</span><span class="L">__</span><span class="K">質量制御再現公表</span><span class="F">１．５</span><span class="L">__</span><span class="H">ジェド</span><span class="K">霊界</span><span class="H">ラジオ</span><span class="K">再現</span><span class="F">０．５５</span><span class="L">__</span><span class="F">８５３</span><span class="H">ニュース</span><span class="F">１．０</span><span class="L">.sea]</span></span><svg class="btns" width="100" height="18" viewBox="0 0 100 18"><defs><linearGradient id="bg" x1="0" y1="0" x2="0" y2="1"><stop offset="0" stop-color="#c6d4e2"/><stop offset="1" stop-color="#d9e4ef"/></linearGradient></defs>
<rect x="0.5" y="0.5" width="31" height="17" rx="2.5" fill="url(#bg)" stroke="#8595a8"/><rect x="1.5" y="1.5" width="29" height="15" rx="1.5" fill="none" stroke="#e3ebf3" stroke-opacity=".7"/>
<rect x="34.5" y="0.5" width="31" height="17" rx="2.5" fill="url(#bg)" stroke="#9dabba"/><rect x="35.5" y="1.5" width="29" height="15" rx="1.5" fill="none" stroke="#e3ebf3" stroke-opacity=".7"/>
<rect x="68.5" y="0.5" width="31" height="17" rx="2.5" fill="url(#bg)" stroke="#8595a8"/><rect x="69.5" y="1.5" width="29" height="15" rx="1.5" fill="none" stroke="#e3ebf3" stroke-opacity=".7"/>
<rect x="10.5" y="8.5" width="10" height="4" rx="1.2" fill="#f3f3f3" stroke="#3a3f46"/>
<rect x="44.6" y="4.6" width="9.8" height="7.8" rx="1.5" fill="#efefef" stroke="#3a3f46" stroke-width="1.3"/><rect x="47.5" y="7.5" width="4" height="2" fill="#f3f3f3" stroke="#3a3f46"/>
<path d="M80.2 5.6 L86.8 11.4 M86.8 5.6 L80.2 11.4" stroke="#3a3f46" stroke-width="4.4" stroke-linecap="round"/><path d="M80.4 5.8 L86.6 11.2 M86.6 5.8 L80.4 11.2" stroke="#f6f6f6" stroke-width="2.4" stroke-linecap="round"/>
</svg></div></div>
<div class="w shu" style="left:548px;top:162px"><div class="tb"><span class="tt"><span class="K">集約一覧</span></span></div><div class="grid">
<div class="hdr" style="left:0;top:0;width:33px"></div>
<div class="hdr" style="left:33px;top:0;width:120px"><span><span class="K">日本語</span></span></div>
<div class="rh" style="top:20px"><span>1</span></div>
<div class="c sel jp" style="left:33px;top:20px;width:120px"><span><span class="F">２１４</span><span class="K">勝</span><span class="H">つ</span></span></div>
<div class="rh" style="top:40px"><span>2</span></div>
<div class="c jp" style="left:33px;top:40px;width:120px"><span><span class="F">ＢＭ</span><span class="K">助</span><span class="H">け</span></span></div>
<div class="rh" style="top:60px"><span>3</span></div>
<div class="c jp" style="left:33px;top:60px;width:120px"><span><span class="K">悪魔釣</span><span class="H">り</span></span></div>
<div class="rh" style="top:80px"><span>4</span></div>
<div class="c jp" style="left:33px;top:80px;width:120px"><span><span class="H">ミロク</span><span class="K">悪</span></span></div>
<div class="rh" style="top:100px"><span>5</span></div>
<div class="c jp" style="left:33px;top:100px;width:120px"><span><span class="K">栗林</span></span></div>
<div class="rh" style="top:120px"><span>6</span></div>
<div class="c jp" style="left:33px;top:120px;width:120px"><span><span class="L">TV</span><span class="K">情報</span></span></div>
<div class="rh" style="top:140px"><span>7</span></div>
<div class="c jp" style="left:33px;top:140px;width:120px"><span><span class="L">NHK</span><span class="K">行</span><span class="H">き</span></span></div>
<div class="rh" style="top:160px"><span>8</span></div>
<div class="c jp" style="left:33px;top:160px;width:120px"><span><span class="K">霊</span><span class="H">ラジオ</span></span></div>
<div class="rh" style="top:180px"><span>9</span></div>
<div class="c jp" style="left:33px;top:180px;width:120px"><span><span class="K">力記事</span></span></div>
<div class="rh" style="top:200px"><span>10</span></div>
<div class="c jp" style="left:33px;top:200px;width:120px"><span><span class="K">稲生殺</span></span></div>
<div class="rh" style="top:220px"><span>11</span></div>
<div class="c jp" style="left:33px;top:220px;width:120px"><span><span class="L">S</span><span class="K">販売</span></span></div>
<div class="rh" style="top:240px"><span>12</span></div>
<div class="c jp" style="left:33px;top:240px;width:120px"><span><span class="K">神禊</span></span></div>
<div class="rh" style="top:260px"><span>13</span></div>
<div class="c jp" style="left:33px;top:260px;width:120px"><span><span class="K">霊警告</span><span class="L">(</span><span class="K">計</span></span></div>
<div class="rh" style="top:280px"><span>14</span></div>
<div class="c jp" style="left:33px;top:280px;width:120px"><span><span class="L">J</span><span class="K">解説</span></span></div>
<div class="rh" style="top:300px"><span>15</span></div>
<div class="c jp" style="left:33px;top:300px;width:120px"><span><span class="K">明治行</span><span class="H">き</span></span></div>
<div class="rh" style="top:320px"><span>16</span></div>
<div class="c jp" style="left:33px;top:320px;width:120px"><span><span class="H">コード</span><span class="K">用法</span></span></div>
<div class="rh" style="top:340px"><span>17</span></div>
<div class="c jp" style="left:33px;top:340px;width:120px"><span><span class="L">NHK</span><span class="H">いち</span></span></div>
<div class="rh" style="top:360px"><span>18</span></div>
<div class="c jp" style="left:33px;top:360px;width:120px"><span><span class="L">N</span><span class="H">いちコン</span></span></div>
<div class="rh" style="top:380px"><span>19</span></div>
<div class="c jp" style="left:33px;top:380px;width:120px"><span><span class="H">らせん</span><span class="K">送</span><span class="H">り</span></span></div>
<div class="rh" style="top:400px"><span>20</span></div>
<div class="c jp" style="left:33px;top:400px;width:120px"><span><span class="K">一説</span></span></div>
<div class="hsb"><svg class="arr" width="17" height="16" viewBox="0 0 17 16"><path d="M10.6 4.8 L6.2 8.5 L10.6 12.2" stroke="#4f4f4f" stroke-width="2.3" fill="none"/></svg><div class="thumb"></div></div>
</div></div>
<div class="w ken" style="left:655px;top:162px"><div class="tb"><span class="tt"><span class="K">検索</span><span class="L">[</span><span class="F">ｔｈｅ２５１２３０</span><span class="L">__</span><span class="K">世界情勢</span><span class="L">__</span><span class="K">質量制御再現公表</span><span class="F">１．５</span><span class="L">__</span><span class="H">ジェド</span><span class="K">霊界</span><span class="H">ラジオ</span><span class="K">再現</span><span class="F">０．５５</span><span class="L">__</span><span class="F">８５３</span><span class="H">ニュース</span><span class="F">１．０</span><span class="L">.sea]</span></span><svg class="btns" width="100" height="18" viewBox="0 0 100 18"><defs><linearGradient id="bg" x1="0" y1="0" x2="0" y2="1"><stop offset="0" stop-color="#c6d4e2"/><stop offset="1" stop-color="#d9e4ef"/></linearGradient></defs>
<rect x="0.5" y="0.5" width="31" height="17" rx="2.5" fill="url(#bg)" stroke="#8595a8"/><rect x="1.5" y="1.5" width="29" height="15" rx="1.5" fill="none" stroke="#e3ebf3" stroke-opacity=".7"/>
<rect x="34.5" y="0.5" width="31" height="17" rx="2.5" fill="url(#bg)" stroke="#9dabba"/><rect x="35.5" y="1.5" width="29" height="15" rx="1.5" fill="none" stroke="#e3ebf3" stroke-opacity=".7"/>
<rect x="68.5" y="0.5" width="31" height="17" rx="2.5" fill="url(#bg)" stroke="#8595a8"/><rect x="69.5" y="1.5" width="29" height="15" rx="1.5" fill="none" stroke="#e3ebf3" stroke-opacity=".7"/>
<rect x="10.5" y="8.5" width="10" height="4" rx="1.2" fill="#f3f3f3" stroke="#3a3f46"/>
<rect x="44.6" y="4.6" width="9.8" height="7.8" rx="1.5" fill="#efefef" stroke="#3a3f46" stroke-width="1.3"/><rect x="47.5" y="7.5" width="4" height="2" fill="#f3f3f3" stroke="#3a3f46"/>
<path d="M80.2 5.6 L86.8 11.4 M86.8 5.6 L80.2 11.4" stroke="#3a3f46" stroke-width="4.4" stroke-linecap="round"/><path d="M80.4 5.8 L86.6 11.2 M86.6 5.8 L80.4 11.2" stroke="#f6f6f6" stroke-width="2.4" stroke-linecap="round"/>
</svg></div></div>
<div class="w shu act" style="left:655px;top:189px"><div class="tb"><span class="tt"><span class="K">集約一覧</span></span></div><div class="grid">
<div class="hdr" style="left:0;top:0;width:33px"></div>
<div class="hdr" style="left:33px;top:0;width:120px"><span><span class="K">日本語</span></span></div>
<div class="hdr" style="left:153px;top:0;width:120px"><span><span class="K">英語</span></span></div>
<div class="hdr" style="left:273px;top:0;width:60px"><span><span class="K">統計評価</span></span></div>
<div class="hdr" style="left:333px;top:0;width:60px"><span><span class="K">平均評価</span></span></div>
<div class="hdr" style="left:393px;top:0;width:50px"><span><span class="K">最小</span><span class="L">EP</span></span></div>
<div class="hdr" style="left:443px;top:0;width:60px"><span><span class="K">合計</span><span class="L">EP</span></span></div>
<div class="hdr" style="left:503px;top:0;width:50px"><span><span class="K">重要</span></span></div>
<div class="hdr" style="left:553px;top:0;width:50px"><span><span class="K">優先</span><span class="L">1</span></span></div>
<div class="hdr" style="left:603px;top:0;width:50px"><span><span class="K">優先</span><span class="L">2</span></span></div>
<div class="hdr" style="left:653px;top:0;width:50px"><span><span class="K">優先</span><span class="L">3</span></span></div>
<div class="rh" style="top:20px"><span>1</span></div>
<div class="c sel foc jp" style="left:33px;top:20px;width:120px"><span><span class="L">the</span><span class="K">分割</span></span></div>
<div class="c sel" style="left:153px;top:20px;width:120px"><span><span class="L">hbnkt</span></span></div>
<div class="c sel r" style="left:273px;top:20px;width:60px"><span><span class="L">2022.85</span></span></div>
<div class="c sel r" style="left:333px;top:20px;width:60px"><span><span class="L">10646.578</span></span></div>
<div class="c sel r" style="left:393px;top:20px;width:50px"><span><span class="L">0</span></span></div>
<div class="c sel r" style="left:443px;top:20px;width:60px"><span><span class="L">0.19</span></span></div>
<div class="c sel r" style="left:503px;top:20px;width:50px"><span><span class="L">0</span></span></div>
<div class="c sel r" style="left:553px;top:20px;width:50px"><span><span class="L">3</span></span></div>
<div class="c sel r" style="left:603px;top:20px;width:50px"><span></span></div>
<div class="c sel r" style="left:653px;top:20px;width:50px"><span></span></div>
<div class="rh" style="top:40px"><span>2</span></div>
<div class="c jp" style="left:33px;top:40px;width:120px"><span><span class="H">ウソ</span><span class="L">CDC</span></span></div>
<div class="c" style="left:153px;top:40px;width:120px"><span><span class="L">cdcus</span></span></div>
<div class="c r" style="left:273px;top:40px;width:60px"><span><span class="L">521.11</span></span></div>
<div class="c r" style="left:333px;top:40px;width:60px"><span><span class="L">2742.684</span></span></div>
<div class="c r" style="left:393px;top:40px;width:50px"><span><span class="L">0</span></span></div>
<div class="c r" style="left:443px;top:40px;width:60px"><span><span class="L">0.19</span></span></div>
<div class="c r" style="left:503px;top:40px;width:50px"><span><span class="L">0</span></span></div>
<div class="c r" style="left:553px;top:40px;width:50px"><span><span class="L">2</span></span></div>
<div class="c r" style="left:603px;top:40px;width:50px"><span></span></div>
<div class="c r" style="left:653px;top:40px;width:50px"><span></span></div>
<div class="rh" style="top:60px"><span>3</span></div>
<div class="c jp" style="left:33px;top:60px;width:120px"><span><span class="L">IDF</span><span class="K">費用</span></span></div>
<div class="c" style="left:153px;top:60px;width:120px"><span><span class="L">IDFhy</span></span></div>
<div class="c r" style="left:273px;top:60px;width:60px"><span><span class="L">39.5</span></span></div>
<div class="c r" style="left:333px;top:60px;width:60px"><span><span class="L">219.444</span></span></div>
<div class="c r" style="left:393px;top:60px;width:50px"><span><span class="L">0.06</span></span></div>
<div class="c r" style="left:443px;top:60px;width:60px"><span><span class="L">0.18</span></span></div>
<div class="c r" style="left:503px;top:60px;width:50px"><span><span class="L">0</span></span></div>
<div class="c r" style="left:553px;top:60px;width:50px"><span><span class="L">2</span></span></div>
<div class="c r" style="left:603px;top:60px;width:50px"><span></span></div>
<div class="c r" style="left:653px;top:60px;width:50px"><span></span></div>
<div class="rh" style="top:80px"><span>4</span></div>
<div class="c jp" style="left:33px;top:80px;width:120px"><span><span class="L">SpaceCraft</span></span></div>
<div class="c" style="left:153px;top:80px;width:120px"><span><span class="L">Scrft</span></span></div>
<div class="c r" style="left:273px;top:80px;width:60px"><span><span class="L">1100</span></span></div>
<div class="c r" style="left:333px;top:80px;width:60px"><span><span class="L">110000</span></span></div>
<div class="c r" style="left:393px;top:80px;width:50px"><span><span class="L">0</span></span></div>
<div class="c r" style="left:443px;top:80px;width:60px"><span><span class="L">0.01</span></span></div>
<div class="c r" style="left:503px;top:80px;width:50px"><span><span class="L">0</span></span></div>
<div class="c r" style="left:553px;top:80px;width:50px"><span><span class="L">2</span></span></div>
<div class="c r" style="left:603px;top:80px;width:50px"><span></span></div>
<div class="c r" style="left:653px;top:80px;width:50px"><span></span></div>
<div class="rh" style="top:100px"><span>5</span></div>
<div class="c jp" style="left:33px;top:100px;width:120px"><span><span class="K">核汚染</span></span></div>
<div class="c" style="left:153px;top:100px;width:120px"><span><span class="L">osnkk</span></span></div>
<div class="c r" style="left:273px;top:100px;width:60px"><span><span class="L">75.97</span></span></div>
<div class="c r" style="left:333px;top:100px;width:60px"><span><span class="L">35.334</span></span></div>
<div class="c r" style="left:393px;top:100px;width:50px"><span><span class="L">0.01</span></span></div>
<div class="c r" style="left:443px;top:100px;width:60px"><span><span class="L">2.15</span></span></div>
<div class="c r" style="left:503px;top:100px;width:50px"><span><span class="L">0</span></span></div>
<div class="c r" style="left:553px;top:100px;width:50px"><span><span class="L">1</span></span></div>
<div class="c r" style="left:603px;top:100px;width:50px"><span></span></div>
<div class="c r" style="left:653px;top:100px;width:50px"><span></span></div>
<div class="rh" style="top:120px"><span>6</span></div>
<div class="c jp" style="left:33px;top:120px;width:120px"><span><span class="K">悪自暴自棄</span></span></div>
<div class="c" style="left:153px;top:120px;width:120px"><span><span class="L">akjbjk</span></span></div>
<div class="c r" style="left:273px;top:120px;width:60px"><span><span class="L">760.74</span></span></div>
<div class="c r" style="left:333px;top:120px;width:60px"><span><span class="L">4226.333</span></span></div>
<div class="c r" style="left:393px;top:120px;width:50px"><span><span class="L">0</span></span></div>
<div class="c r" style="left:443px;top:120px;width:60px"><span><span class="L">0.18</span></span></div>
<div class="c r" style="left:503px;top:120px;width:50px"><span><span class="L">0</span></span></div>
<div class="c r" style="left:553px;top:120px;width:50px"><span><span class="L">1</span></span></div>
<div class="c r" style="left:603px;top:120px;width:50px"><span></span></div>
<div class="c r" style="left:653px;top:120px;width:50px"><span></span></div>
<div class="rh" style="top:140px"><span>7</span></div>
<div class="c jp" style="left:33px;top:140px;width:120px"><span><span class="F">２６６</span><span class="K">生</span><span class="H">き</span></span></div>
<div class="c" style="left:153px;top:140px;width:120px"><span><span class="L">ikrsu</span></span></div>
<div class="c r" style="left:273px;top:140px;width:60px"><span><span class="L">59.01</span></span></div>
<div class="c r" style="left:333px;top:140px;width:60px"><span><span class="L">453.923</span></span></div>
<div class="c r" style="left:393px;top:140px;width:50px"><span><span class="L">0.02</span></span></div>
<div class="c r" style="left:443px;top:140px;width:60px"><span><span class="L">0.13</span></span></div>
<div class="c r" style="left:503px;top:140px;width:50px"><span><span class="L">0</span></span></div>
<div class="c r" style="left:553px;top:140px;width:50px"><span><span class="L">1</span></span></div>
<div class="c r" style="left:603px;top:140px;width:50px"><span></span></div>
<div class="c r" style="left:653px;top:140px;width:50px"><span></span></div>
<div class="rh" style="top:160px"><span>8</span></div>
<div class="c jp" style="left:33px;top:160px;width:120px"><span><span class="L">G</span><span class="K">崩壊</span></span></div>
<div class="c" style="left:153px;top:160px;width:120px"><span><span class="L">Ghuki</span></span></div>
<div class="c r" style="left:273px;top:160px;width:60px"><span><span class="L">61.65</span></span></div>
<div class="c r" style="left:333px;top:160px;width:60px"><span><span class="L">342.5</span></span></div>
<div class="c r" style="left:393px;top:160px;width:50px"><span><span class="L">0.01</span></span></div>
<div class="c r" style="left:443px;top:160px;width:60px"><span><span class="L">0.18</span></span></div>
<div class="c r" style="left:503px;top:160px;width:50px"><span><span class="L">0</span></span></div>
<div class="c r" style="left:553px;top:160px;width:50px"><span><span class="L">1</span></span></div>
<div class="c r" style="left:603px;top:160px;width:50px"><span></span></div>
<div class="c r" style="left:653px;top:160px;width:50px"><span></span></div>
<div class="rh" style="top:180px"><span>9</span></div>
<div class="c jp" style="left:33px;top:180px;width:120px"><span><span class="K">磁場歳差</span></span></div>
<div class="c" style="left:153px;top:180px;width:120px"><span><span class="L">sisjb</span></span></div>
<div class="c r" style="left:273px;top:180px;width:60px"><span><span class="L">120.92</span></span></div>
<div class="c r" style="left:333px;top:180px;width:60px"><span><span class="L">636.421</span></span></div>
<div class="c r" style="left:393px;top:180px;width:50px"><span><span class="L">0.01</span></span></div>
<div class="c r" style="left:443px;top:180px;width:60px"><span><span class="L">0.19</span></span></div>
<div class="c r" style="left:503px;top:180px;width:50px"><span><span class="L">0</span></span></div>
<div class="c r" style="left:553px;top:180px;width:50px"><span><span class="L">1</span></span></div>
<div class="c r" style="left:603px;top:180px;width:50px"><span></span></div>
<div class="c r" style="left:653px;top:180px;width:50px"><span></span></div>
<div class="rh" style="top:200px"><span>10</span></div>
<div class="c jp" style="left:33px;top:200px;width:120px"><span><span class="K">核</span><span class="H">イオン</span><span class="K">化</span></span></div>
<div class="c" style="left:153px;top:200px;width:120px"><span><span class="L">ionkkk</span></span></div>
<div class="c r" style="left:273px;top:200px;width:60px"><span><span class="L">31</span></span></div>
<div class="c r" style="left:333px;top:200px;width:60px"><span><span class="L">140.909</span></span></div>
<div class="c r" style="left:393px;top:200px;width:50px"><span><span class="L">0.01</span></span></div>
<div class="c r" style="left:443px;top:200px;width:60px"><span><span class="L">0.22</span></span></div>
<div class="c r" style="left:503px;top:200px;width:50px"><span><span class="L">0</span></span></div>
<div class="c r" style="left:553px;top:200px;width:50px"><span><span class="L">1</span></span></div>
<div class="c r" style="left:603px;top:200px;width:50px"><span></span></div>
<div class="c r" style="left:653px;top:200px;width:50px"><span></span></div>
<div class="rh" style="top:220px"><span>11</span></div>
<div class="c jp" style="left:33px;top:220px;width:120px"><span><span class="K">剣</span><span class="H">を</span><span class="K">置</span><span class="H">く</span></span></div>
<div class="c" style="left:153px;top:220px;width:120px"><span><span class="L">okknw</span></span></div>
<div class="c r" style="left:273px;top:220px;width:60px"><span><span class="L">93.7</span></span></div>
<div class="c r" style="left:333px;top:220px;width:60px"><span><span class="L">851.818</span></span></div>
<div class="c r" style="left:393px;top:220px;width:50px"><span><span class="L">0.01</span></span></div>
<div class="c r" style="left:443px;top:220px;width:60px"><span><span class="L">0.11</span></span></div>
<div class="c r" style="left:503px;top:220px;width:50px"><span><span class="L">0</span></span></div>
<div class="c r" style="left:553px;top:220px;width:50px"><span><span class="L">1</span></span></div>
<div class="c r" style="left:603px;top:220px;width:50px"><span></span></div>
<div class="c r" style="left:653px;top:220px;width:50px"><span></span></div>
<div class="rh" style="top:240px"><span>12</span></div>
<div class="c jp" style="left:33px;top:240px;width:120px"><span><span class="K">悪魔菌</span></span></div>
<div class="c" style="left:153px;top:240px;width:120px"><span><span class="L">akmkn</span></span></div>
<div class="c r" style="left:273px;top:240px;width:60px"><span><span class="L">56.35</span></span></div>
<div class="c r" style="left:333px;top:240px;width:60px"><span><span class="L">402.5</span></span></div>
<div class="c r" style="left:393px;top:240px;width:50px"><span><span class="L">0.02</span></span></div>
<div class="c r" style="left:443px;top:240px;width:60px"><span><span class="L">0.14</span></span></div>
<div class="c r" style="left:503px;top:240px;width:50px"><span><span class="L">0</span></span></div>
<div class="c r" style="left:553px;top:240px;width:50px"><span><span class="L">1</span></span></div>
<div class="c r" style="left:603px;top:240px;width:50px"><span></span></div>
<div class="c r" style="left:653px;top:240px;width:50px"><span></span></div>
<div class="rh" style="top:260px"><span>13</span></div>
<div class="c jp" style="left:33px;top:260px;width:120px"><span><span class="L">S</span><span class="H">アンボイ</span></span></div>
<div class="c" style="left:153px;top:260px;width:120px"><span><span class="L">Samboy</span></span></div>
<div class="c r" style="left:273px;top:260px;width:60px"><span><span class="L">68.51</span></span></div>
<div class="c r" style="left:333px;top:260px;width:60px"><span><span class="L">1712.75</span></span></div>
<div class="c r" style="left:393px;top:260px;width:50px"><span><span class="L">0.02</span></span></div>
<div class="c r" style="left:443px;top:260px;width:60px"><span><span class="L">0.04</span></span></div>
<div class="c r" style="left:503px;top:260px;width:50px"><span><span class="L">0</span></span></div>
<div class="c r" style="left:553px;top:260px;width:50px"><span><span class="L">1</span></span></div>
<div class="c r" style="left:603px;top:260px;width:50px"><span></span></div>
<div class="c r" style="left:653px;top:260px;width:50px"><span></span></div>
<div class="rh" style="top:280px"><span>14</span></div>
<div class="c jp" style="left:33px;top:280px;width:120px"><span><span class="K">暗殺</span></span></div>
<div class="c" style="left:153px;top:280px;width:120px"><span><span class="L">ansatu</span></span></div>
<div class="c r" style="left:273px;top:280px;width:60px"><span><span class="L">9.13</span></span></div>
<div class="c r" style="left:333px;top:280px;width:60px"><span><span class="L">30.433</span></span></div>
<div class="c r" style="left:393px;top:280px;width:50px"><span><span class="L">0.15</span></span></div>
<div class="c r" style="left:443px;top:280px;width:60px"><span><span class="L">0.3</span></span></div>
<div class="c r" style="left:503px;top:280px;width:50px"><span><span class="L">0</span></span></div>
<div class="c r" style="left:553px;top:280px;width:50px"><span><span class="L">1</span></span></div>
<div class="c r" style="left:603px;top:280px;width:50px"><span></span></div>
<div class="c r" style="left:653px;top:280px;width:50px"><span></span></div>
<div class="rh" style="top:300px"><span>15</span></div>
<div class="c jp" style="left:33px;top:300px;width:120px"><span><span class="K">異常性</span></span></div>
<div class="c" style="left:153px;top:300px;width:120px"><span><span class="L">ijysi</span></span></div>
<div class="c r" style="left:273px;top:300px;width:60px"><span><span class="L">22.83</span></span></div>
<div class="c r" style="left:333px;top:300px;width:60px"><span><span class="L">190.25</span></span></div>
<div class="c r" style="left:393px;top:300px;width:50px"><span><span class="L">0.06</span></span></div>
<div class="c r" style="left:443px;top:300px;width:60px"><span><span class="L">0.12</span></span></div>
<div class="c r" style="left:503px;top:300px;width:50px"><span><span class="L">0</span></span></div>
<div class="c r" style="left:553px;top:300px;width:50px"><span><span class="L">1</span></span></div>
<div class="c r" style="left:603px;top:300px;width:50px"><span></span></div>
<div class="c r" style="left:653px;top:300px;width:50px"><span></span></div>
<div class="rh" style="top:320px"><span>16</span></div>
<div class="c jp" style="left:33px;top:320px;width:120px"><span><span class="L">AH</span><span class="K">邪悪</span></span></div>
<div class="c" style="left:153px;top:320px;width:120px"><span><span class="L">ahjjak</span></span></div>
<div class="c r" style="left:273px;top:320px;width:60px"><span><span class="L">118.51</span></span></div>
<div class="c r" style="left:333px;top:320px;width:60px"><span><span class="L">3950.333</span></span></div>
<div class="c r" style="left:393px;top:320px;width:50px"><span><span class="L">0.01</span></span></div>
<div class="c r" style="left:443px;top:320px;width:60px"><span><span class="L">0.03</span></span></div>
<div class="c r" style="left:503px;top:320px;width:50px"><span><span class="L">0</span></span></div>
<div class="c r" style="left:553px;top:320px;width:50px"><span><span class="L">1</span></span></div>
<div class="c r" style="left:603px;top:320px;width:50px"><span></span></div>
<div class="c r" style="left:653px;top:320px;width:50px"><span></span></div>
<div class="rh" style="top:340px"><span>17</span></div>
<div class="c jp" style="left:33px;top:340px;width:120px"><span><span class="H">ドル</span><span class="K">下降</span></span></div>
<div class="c" style="left:153px;top:340px;width:120px"><span><span class="L">kkudl</span></span></div>
<div class="c r" style="left:273px;top:340px;width:60px"><span><span class="L">27.81</span></span></div>
<div class="c r" style="left:333px;top:340px;width:60px"><span><span class="L">25.749</span></span></div>
<div class="c r" style="left:393px;top:340px;width:50px"><span><span class="L">0.05</span></span></div>
<div class="c r" style="left:443px;top:340px;width:60px"><span><span class="L">1.08</span></span></div>
<div class="c r" style="left:503px;top:340px;width:50px"><span><span class="L">0</span></span></div>
<div class="c r" style="left:553px;top:340px;width:50px"><span><span class="L">1</span></span></div>
<div class="c r" style="left:603px;top:340px;width:50px"><span></span></div>
<div class="c r" style="left:653px;top:340px;width:50px"><span></span></div>
<div class="rh" style="top:360px"><span>18</span></div>
<div class="c jp" style="left:33px;top:360px;width:120px"><span><span class="H">サハンド</span><span class="K">山</span></span></div>
<div class="c" style="left:153px;top:360px;width:120px"><span><span class="L">mtshnd</span></span></div>
<div class="c r" style="left:273px;top:360px;width:60px"><span><span class="L">39.16</span></span></div>
<div class="c r" style="left:333px;top:360px;width:60px"><span><span class="L">391.599</span></span></div>
<div class="c r" style="left:393px;top:360px;width:50px"><span><span class="L">0.03</span></span></div>
<div class="c r" style="left:443px;top:360px;width:60px"><span><span class="L">0.1</span></span></div>
<div class="c r" style="left:503px;top:360px;width:50px"><span><span class="L">0</span></span></div>
<div class="c r" style="left:553px;top:360px;width:50px"><span><span class="L">1</span></span></div>
<div class="c r" style="left:603px;top:360px;width:50px"><span></span></div>
<div class="c r" style="left:653px;top:360px;width:50px"><span></span></div>
<div class="rh" style="top:380px"><span>19</span></div>
<div class="c jp" style="left:33px;top:380px;width:120px"><span><span class="L">JMB</span><span class="K">生</span><span class="H">き</span></span></div>
<div class="c" style="left:153px;top:380px;width:120px"><span><span class="L">ikJMB</span></span></div>
<div class="c r" style="left:273px;top:380px;width:60px"><span><span class="L">23.33</span></span></div>
<div class="c r" style="left:333px;top:380px;width:60px"><span><span class="L">179.461</span></span></div>
<div class="c r" style="left:393px;top:380px;width:50px"><span><span class="L">0.02</span></span></div>
<div class="c r" style="left:443px;top:380px;width:60px"><span><span class="L">0.13</span></span></div>
<div class="c r" style="left:503px;top:380px;width:50px"><span><span class="L">0</span></span></div>
<div class="c r" style="left:553px;top:380px;width:50px"><span><span class="L">1</span></span></div>
<div class="c r" style="left:603px;top:380px;width:50px"><span></span></div>
<div class="c r" style="left:653px;top:380px;width:50px"><span></span></div>
<div class="rh" style="top:400px"><span>20</span></div>
<div class="c jp" style="left:33px;top:400px;width:120px"><span><span class="K">大宇宙</span></span></div>
<div class="c" style="left:153px;top:400px;width:120px"><span><span class="L">uchu</span></span></div>
<div class="c r" style="left:273px;top:400px;width:60px"><span><span class="L">12.5</span></span></div>
<div class="c r" style="left:333px;top:400px;width:60px"><span><span class="L">100.25</span></span></div>
<div class="c r" style="left:393px;top:400px;width:50px"><span><span class="L">0.01</span></span></div>
<div class="c r" style="left:443px;top:400px;width:60px"><span><span class="L">0.1</span></span></div>
<div class="c r" style="left:503px;top:400px;width:50px"><span><span class="L">0</span></span></div>
<div class="c r" style="left:553px;top:400px;width:50px"><span><span class="L">1</span></span></div>
<div class="c r" style="left:603px;top:400px;width:50px"><span></span></div>
<div class="c r" style="left:653px;top:400px;width:50px"><span></span></div>
<div class="hsb"><svg class="arr" width="17" height="16" viewBox="0 0 17 16"><path d="M10.6 4.8 L6.2 8.5 L10.6 12.2" stroke="#4f4f4f" stroke-width="2.3" fill="none"/></svg><div class="thumb"></div></div>
</div></div>
</body></html>
